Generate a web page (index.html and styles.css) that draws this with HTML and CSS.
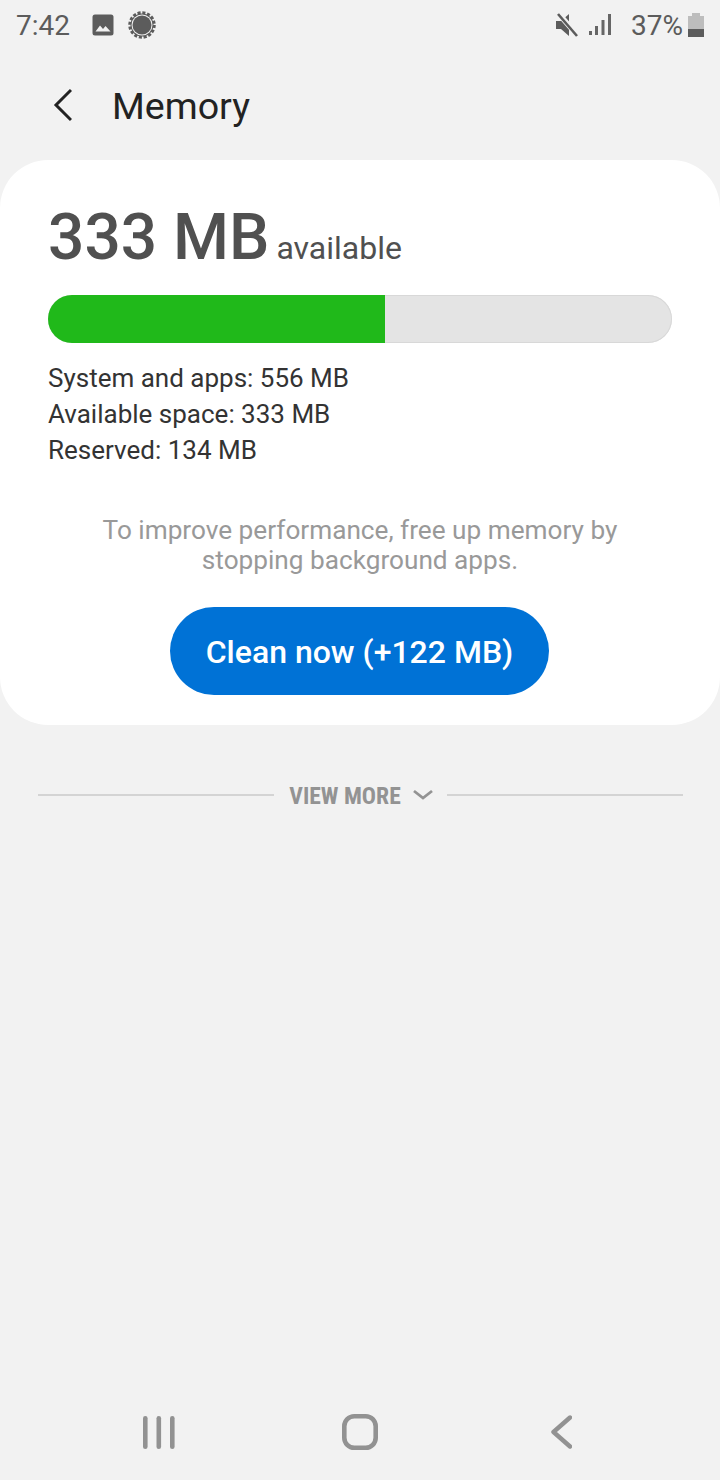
FILE: index.html
```html
<!DOCTYPE html>
<html lang="en">
<head>
<meta charset="utf-8">
<title>Memory</title>
<link rel="stylesheet" href="styles.css">
</head>
<body>
<div class="screen">
  <div class="status">
    <div class="status-left">
      <span class="time">7:42</span>
      <svg width="22" height="22" viewBox="0 0 22 22"><rect x="0.500" y="0.500" width="21" height="21" rx="2.500" fill="#5c5c5c"/><path d="M3.500 17.500l4.500-6 3 3.500 2.500-3 5 5.500z" fill="#f2f2f2"/></svg>
      <svg class="ic-sun" width="28" height="28" viewBox="0 0 28 28"><circle cx="14" cy="14" r="12" fill="none" stroke="#5c5c5c" stroke-width="3.500" stroke-dasharray="3 1.710"/><circle cx="14" cy="14" r="11.500" fill="#5c5c5c"/><circle cx="14" cy="14" r="10.500" fill="#f2f2f2"/><circle cx="14" cy="14" r="9.500" fill="#5c5c5c"/></svg>
    </div>
    <div class="status-right">
      <svg width="22" height="24" viewBox="0 0 22 24"><path d="M0 8h5l8-7v22l-8-7H0z" fill="#5c5c5c"/><path d="M2 0l20 23" stroke="#f2f2f2" stroke-width="5.500"/><path d="M2 1l19 22" stroke="#5c5c5c" stroke-width="2.600"/></svg>
      <svg class="ic-signal" width="22" height="22" viewBox="0 0 22 22"><g fill="#666"><rect x="0" y="17" width="3" height="4"/><rect x="6" y="12" width="3" height="9"/><rect x="12.500" y="6" width="3" height="15"/><rect x="19" y="0" width="3" height="21"/></g></svg>
      <span class="pct">37%</span>
      <svg width="16" height="25" viewBox="0 0 16 25"><rect x="4" y="0" width="8" height="4" fill="#bdbdbd"/><rect x="0" y="3" width="16" height="14" fill="#bdbdbd"/><rect x="0" y="16" width="16" height="8" fill="#5c5c5c"/></svg>
    </div>
  </div>
  <header class="appbar">
    <svg width="24" height="34" viewBox="0 0 24 34"><path d="M23 2L8 17l15 15" fill="none" stroke="#222" stroke-width="3"/></svg>
    <h1>Memory</h1>
  </header>
  <section class="card">
    <div class="headline"><span class="big">333 MB</span><span class="avail">available</span></div>
    <div class="bar"><div class="fill"></div></div>
    <ul class="stats">
      <li>System and apps: 556 MB</li>
      <li>Available space: 333 MB</li>
      <li>Reserved: 134 MB</li>
    </ul>
    <p class="hint">To improve performance, free up memory by<br>stopping background apps.</p>
    <button class="clean">Clean now (+122 MB)</button>
  </section>
  <div class="more">
    <span class="rule"></span>
    <span class="more-label">VIEW MORE</span>
    <svg width="20" height="12" viewBox="0 0 20 12"><path d="M1 2l9 7 9-7" fill="none" stroke="#939393" stroke-width="2.800"/></svg>
    <span class="rule"></span>
  </div>
  <nav class="navbar">
    <svg width="32" height="34" viewBox="0 0 32 34"><g fill="#929292"><rect x="0" y="1" width="4.600" height="33" rx="2.300"/><rect x="13.500" y="1" width="4.600" height="33" rx="2.300"/><rect x="27" y="1" width="4.600" height="33" rx="2.300"/></g></svg>
    <svg width="36" height="36" viewBox="0 0 36 36"><rect x="2.300" y="2.300" width="31.400" height="31.400" rx="10" fill="none" stroke="#929292" stroke-width="4.600"/></svg>
    <svg width="27" height="34" viewBox="0 0 27 34"><path d="M25 2.500L8.500 17 25 31.500" fill="none" stroke="#929292" stroke-width="4.400" stroke-linecap="round" stroke-linejoin="round"/></svg>
  </nav>
</div>
</body>
</html>
```
FILE: styles.css
```css
* { box-sizing: border-box; }
html, body { margin: 0; padding: 0; }
body { background: #f2f2f2; font-family: Roboto, sans-serif; }
.screen { width: 720px; height: 1480px; display: flex; flex-direction: column; background: #f2f2f2; }
.status { height: 50px; padding: 0 16px; display: flex; justify-content: space-between; align-items: center; color: #5c5c5c; font-size: 28px; }
.status-left, .status-right { display: flex; align-items: center; }
.time { margin-right: 22px; }
.ic-sun { margin-left: 14px; }
.ic-signal { margin-left: 11px; }
.pct { margin-left: 20px; margin-right: 5px; }
.appbar { height: 110px; padding: 0 0 0 48px; display: flex; align-items: center; gap: 40px; }
.appbar h1 { margin: 2px 0 0; font-size: 37.600px; font-weight: 400; color: #222; }
.card { height: 565px; background: #fff; border-radius: 48px; padding: 40px 48px 0; display: flex; flex-direction: column; }
.headline { display: flex; align-items: baseline; height: 80px; color: #505050; }
.big { font-size: 64px; font-weight: 500; }
.avail { font-size: 32px; margin-left: 7px; }
.bar { margin-top: 15px; height: 48px; border-radius: 24px; background: #e4e4e4; overflow: hidden; box-shadow: inset 0 0 0 1px #d8d8d8; }
.fill { width: 337px; height: 100%; background: #20b91a; }
.stats { list-style: none; margin: 17px 0 0; padding: 0; font-size: 26px; line-height: 36px; color: #333; }
.hint { margin: 47px 0 0; text-align: center; font-size: 26.200px; line-height: 30px; color: #999; }
.clean { align-self: center; margin: 32px 1px 0 0; padding: 2px 0 0; width: 379px; height: 88px; border: 0; border-radius: 44px; background: #0072d6; color: #fff; font: 500 32px Roboto, sans-serif; }
.more { margin-top: 54px; padding: 0 37px 0 38px; display: flex; align-items: center; height: 32px; }
.rule { flex: 1; height: 2px; background: #d4d4d4; }
.more-label { margin: 2px 12px 0 15px; font-size: 23.600px; font-weight: 700; color: #939393; font-stretch: condensed; }
.more svg { margin-right: 14px; }
.navbar { margin-top: auto; height: 96px; padding: 0 0 0 143px; display: flex; gap: 167px; align-items: center; }
```
